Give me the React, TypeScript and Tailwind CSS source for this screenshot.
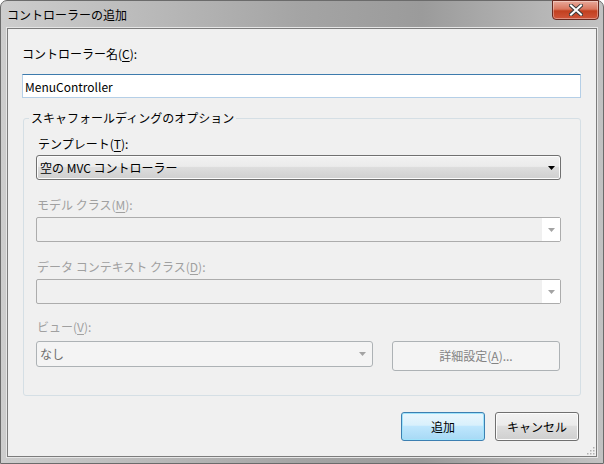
import React from 'react';

const font = { fontFamily: '"Noto Sans CJK JP", "Noto Sans", sans-serif' };

function Arrow({ disabled }: { disabled?: boolean }) {
  return (
    <svg width="7" height="4" viewBox="0 0 7 4" className="shrink-0">
      <path d="M0 0h7L3.5 4z" fill={disabled ? '#a3a3a3' : '#000'} />
    </svg>
  );
}

function Mn({ children }: { children: React.ReactNode }) {
  return <span className="underline underline-offset-2">{children}</span>;
}

function DisabledCombo() {
  return (
    <div className="flex h-[25px] w-[525px] rounded-[2px] border border-[#acacac] bg-[#f0f0f0]">
      <div className="flex-1" />
      <div className="flex w-[18px] items-center justify-center bg-white">
        <Arrow disabled />
      </div>
    </div>
  );
}

export default function App() {
  return (
    <div className="h-[464px] w-[604px] bg-white text-[12px] leading-[16px]" style={font}>
      <div className="flex h-[464px] w-[604px] flex-col rounded-t-[7px] border border-[#6b6b6b] bg-[linear-gradient(90deg,#cdcdcd_0%,#b9b9b9_25%,#a4a4a4_50%,#9b9b9b_70%,#b6b6b6_90%,#c2c2c2_100%)] px-[6px] pb-[6px]">
        {/* title bar */}
        <div className="flex h-[27px] shrink-0 items-start justify-between">
          <div className="pt-[6px] text-[12px] text-black">コントローラーの追加</div>
          <div className="relative mr-[-2px] mt-[-1px] flex h-[20px] w-[47px] items-center justify-center rounded-b-[4px] border border-[#6a2a20] bg-[linear-gradient(180deg,#e8a99a_0%,#d9775f_45%,#c2401f_55%,#d0553a_100%)] shadow-[inset_0_0_0_1px_rgba(255,255,255,0.35)]">
            <svg width="14" height="12" viewBox="0 0 14 12">
              <path d="M2 1.5L12 10.5M12 1.5L2 10.5" stroke="#3b3b3b" strokeWidth="4" strokeLinecap="square" />
              <path d="M2 1.5L12 10.5M12 1.5L2 10.5" stroke="#fff" strokeWidth="2" strokeLinecap="square" />
            </svg>
          </div>
        </div>

        {/* client area */}
        <div className="relative flex flex-1 flex-col border border-[#7c7c7c] bg-[#f0f0f0] px-[14px] pt-[17px] shadow-[0_0_0_1px_#e6e6e6]">
          <div className="text-black">
            コントローラー名(<Mn>C</Mn>):
          </div>
          <input
            readOnly
            value="MenuController"
            className="mt-[12px] h-[24px] w-[559px] border border-[#b5cfe7] border-t-[#3d7bad] bg-white px-[2px] text-[12px] text-black outline-none"
            style={font}
          />

          <fieldset className="mt-[12px] ml-[1px] h-[286px] w-[558px] rounded-[3px] border border-[#d5dfe5] pl-[12px]">
            <legend className="ml-[-7px] px-[2px] text-black">スキャフォールディングのオプション</legend>

            <div className="mt-[10px] pl-[2px] text-black">
              テンプレート(<Mn>T</Mn>):
            </div>
            <div className="mt-[3px] flex h-[25px] w-[525px] items-center rounded-[3px] border border-[#707070] bg-[linear-gradient(180deg,#f2f2f2_0%,#ebebeb_45%,#dddddd_50%,#cfcfcf_100%)] pl-[3px] pr-[5px] shadow-[inset_0_0_0_1px_#fcfcfc]">
              <span className="flex-1 text-black">空の MVC コントローラー</span>
              <Arrow />
            </div>

            <div className="mt-[17px] pl-[1px] text-[#a0a0a0]">
              モデル クラス(<Mn>M</Mn>):
            </div>
            <div className="mt-[4px]">
              <DisabledCombo />
            </div>

            <div className="mt-[17px] pl-[1px] text-[#a0a0a0]">
              データ コンテキスト クラス(<Mn>D</Mn>):
            </div>
            <div className="mt-[4px]">
              <DisabledCombo />
            </div>

            <div className="mt-[15px] pl-[1px] text-[#a0a0a0]">
              ビュー(<Mn>V</Mn>):
            </div>
            <div className="mt-[6px] flex items-start gap-[19px]">
              <div className="flex h-[26px] w-[337px] items-center rounded-[3px] border border-[#adb2b5] bg-[#f4f4f4] pl-[3px] pr-[6px]">
                <span className="flex-1 text-[#6d6d6d]">なし</span>
                <Arrow disabled />
              </div>
              <div className="flex h-[30px] w-[168px] items-center justify-center rounded-[3px] border border-[#adb2b5] bg-[#f4f4f4] text-[#838383]">
                詳細設定(<Mn>A</Mn>)...
              </div>
            </div>
          </fieldset>

          <div className="mt-[16px] flex justify-end gap-[10px] pr-[3px]">
            <div className="flex h-[29px] w-[84px] items-center justify-center rounded-[3px] border border-[#3c7fb1] bg-[linear-gradient(180deg,#eaf6fd_0%,#d9f0fc_45%,#bee6fd_50%,#a7d9f5_100%)] text-black shadow-[inset_0_0_0_1px_#9fe3fb]">
              追加
            </div>
            <div className="flex h-[29px] w-[84px] items-center justify-center rounded-[3px] border border-[#707070] bg-[linear-gradient(180deg,#f2f2f2_0%,#ebebeb_45%,#dddddd_50%,#cfcfcf_100%)] text-black shadow-[inset_0_0_0_1px_#fcfcfc]">
              キャンセル
            </div>
          </div>

          {/* resize grip */}
          <svg width="10" height="10" viewBox="0 0 10 10" className="absolute bottom-[1px] right-[1px]">
            {[
              [8, 2], [8, 5], [5, 5], [8, 8], [5, 8], [2, 8],
            ].map(([x, y]) => (
              <rect key={`${x}-${y}`} x={x} y={y} width="1.5" height="1.5" fill="#b0b0b0" />
            ))}
          </svg>
        </div>
      </div>
    </div>
  );
}
